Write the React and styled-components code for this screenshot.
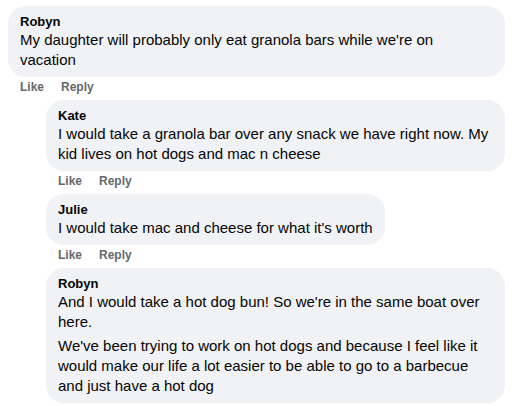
import styled, { createGlobalStyle } from "styled-components";

const GlobalStyle = createGlobalStyle`
  html, body {
    margin: 0;
    padding: 0;
    background: #ffffff;
  }
  body {
    font-family: "Liberation Sans", Arial, sans-serif;
    color: #050505;
    -webkit-font-smoothing: antialiased;
  }
`;

// wrapRight: extra room on the right so lines break where the screenshot does
const comments = [
  {
    name: "Robyn",
    wrapRight: 40,
    body: ["My daughter will probably only eat granola bars while we're on vacation"],
  },
  {
    name: "Kate",
    reply: true,
    body: [
      "I would take a granola bar over any snack we have right now. My kid lives on hot dogs and mac n cheese",
    ],
  },
  {
    name: "Julie",
    reply: true,
    body: ["I would take mac and cheese for what it's worth"],
  },
  {
    name: "Robyn",
    reply: true,
    last: true,
    body: [
      "And I would take a hot dog bun! So we're in the same boat over here.",
      "We've been trying to work on hot dogs and because I feel like it would make our life a lot easier to be able to go to a barbecue and just have a hot dog",
    ],
  },
];

export default function App() {
  return (
    <>
      <GlobalStyle />
      <Thread>
        {comments.map((c, i) => (
          <Comment key={i} $reply={c.reply}>
            <Bubble $wrapRight={c.wrapRight}>
              <Author>{c.name}</Author>
              {c.body.map((p, j) => (
                <Paragraph key={j}>{p}</Paragraph>
              ))}
            </Bubble>
            {!c.last && (
              <Actions>
                <Action>Like</Action>
                <Action>Reply</Action>
              </Actions>
            )}
          </Comment>
        ))}
      </Thread>
    </>
  );
}

const Thread = styled.div`
  display: flex;
  flex-direction: column;
  gap: 5px;
  padding: 6px 7px 0 8px;
  width: 512px;
  height: 406px;
  box-sizing: border-box;
  overflow: hidden;
`;

const Comment = styled.div`
  display: flex;
  flex-direction: column;
  align-items: flex-start;
  margin-left: ${(p) => (p.$reply ? "38px" : "0")};
`;

const Bubble = styled.div`
  background: #f0f2f5;
  border-radius: 18px;
  padding: 8px ${(p) => p.$wrapRight || 12}px 7px 12px;
  box-sizing: border-box;
  max-width: 100%;
  width: ${(p) => (p.$wrapRight ? "100%" : "auto")};
`;

const Author = styled.div`
  font-size: 13px;
  line-height: 16px;
  font-weight: 700;
  color: #050505;
`;

const Paragraph = styled.p`
  margin: 0;
  font-size: 15px;
  line-height: 20px;
  color: #050505;

  & + & {
    margin-top: 4px;
  }
`;

const Actions = styled.div`
  display: flex;
  gap: 17px;
  padding: 2px 0 0 12px;
`;

const Action = styled.span`
  font-size: 12px;
  line-height: 16px;
  font-weight: 700;
  color: #65676b;
`;
